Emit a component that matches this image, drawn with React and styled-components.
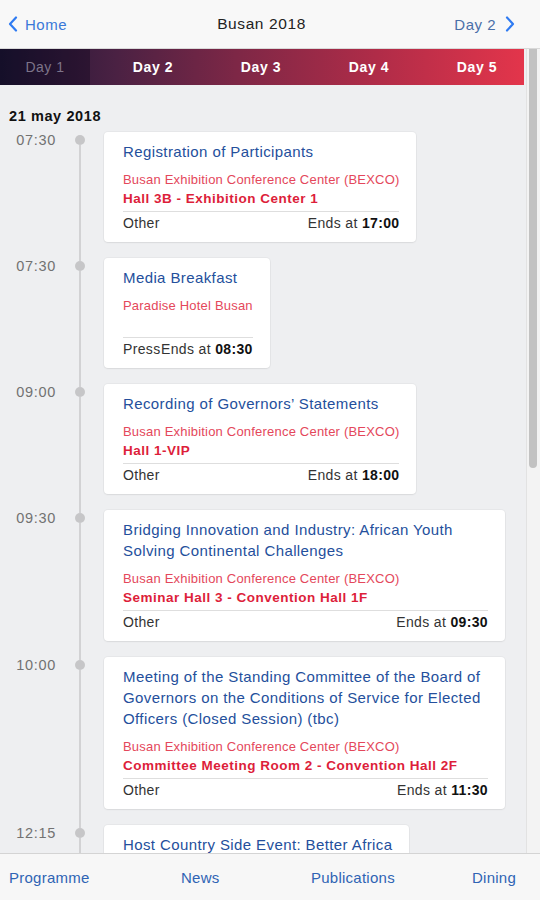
import React from 'react';
import styled, { createGlobalStyle } from 'styled-components';

const GlobalStyle = createGlobalStyle`
  html, body { margin: 0; padding: 0; }
  body { font-family: "Liberation Sans", Arial, Helvetica, sans-serif; background: #eeeff1; }
  * { box-sizing: border-box; }
`;

const Screen = styled.div`
  width: 540px;
  height: 900px;
  display: flex;
  flex-direction: column;
  overflow: hidden;
  background: #eeeff1;
`;

const NavBar = styled.header`
  flex: none;
  height: 49px;
  display: grid;
  grid-template-columns: 1fr auto 1fr;
  align-items: center;
  padding: 0 25px 0 8px;
  background: #f8f8f8;
  border-bottom: 1px solid #d9d9d9;
`;

const NavLink = styled.div`
  display: flex;
  align-items: center;
  gap: ${p => (p.$right ? '9px' : '7px')};
  justify-self: ${p => (p.$right ? 'end' : 'start')};
  font-size: 15px;
  letter-spacing: 0.5px;
  color: ${p => (p.$right ? '#4a6fa8' : '#3a78d8')};
`;

const Title = styled.div`
  font-size: 15.5px;
  letter-spacing: 0.6px;
  color: #222;
`;

const Body = styled.div`
  flex: 1;
  min-height: 0;
  display: flex;
`;

const MainCol = styled.div`
  width: 526px;
  flex: none;
  display: flex;
  flex-direction: column;
  overflow: hidden;
`;

const TabBar = styled.div`
  flex: none;
  height: 36px;
  margin-right: 2px;
  display: flex;
  overflow: hidden;
  background: linear-gradient(90deg, #1c1634 0%, #4a2143 22%, #7d2746 45%, #b02c48 72%, #e3354b 100%);
`;

const FirstTab = styled.div`
  flex: none;
  width: 90px;
  display: flex;
  align-items: center;
  justify-content: center;
  background: rgba(8, 4, 22, 0.35);
  color: #7d7489;
  font-size: 14px;
  letter-spacing: 0.5px;
`;

const TabGroup = styled.div`
  flex: none;
  display: flex;
  padding-left: 9px;
`;

const Tab = styled.div`
  flex: none;
  width: 108px;
  display: flex;
  align-items: center;
  justify-content: center;
  color: #fff;
  font-size: 14px;
  letter-spacing: 0.6px;
  font-weight: bold;
`;

const Content = styled.div`
  flex: 1;
  min-height: 0;
  overflow: hidden;
  padding: 22px 21px 0 8px;
`;

const DateHeading = styled.div`
  font-size: 14.5px;
  letter-spacing: 0.6px;
  font-weight: bold;
  line-height: 18px;
  color: #111;
  margin: 0 0 7px 1px;
`;

const Row = styled.div`
  display: flex;
`;

const Time = styled.div`
  flex: none;
  width: 48px;
  text-align: right;
  font-size: 14.5px;
  letter-spacing: 0.7px;
  line-height: 17px;
  color: #727272;
`;

const Rail = styled.div`
  flex: none;
  width: 48px;
  display: flex;
  flex-direction: column;
  align-items: center;
`;

const RailLine = styled.div`
  width: 2px;
  flex: ${p => (p.$grow ? '1' : 'none')};
  height: ${p => (p.$grow ? 'auto' : '3px')};
  background: ${p => (p.$hidden ? 'transparent' : '#d2d2d4')};
`;

const Dot = styled.div`
  flex: none;
  width: 10px;
  height: 10px;
  border-radius: 50%;
  background: #c6c6c8;
`;

const CardCol = styled.div`
  flex: 1;
  min-width: 0;
  padding-bottom: 16px;
`;

const Card = styled.div`
  width: fit-content;
  max-width: 100%;
  background: #fff;
  border-radius: 4px;
  padding: 9px 17px 8px 19px;
  box-shadow: 0 0 0 1px rgba(0, 0, 0, 0.03), 0 1px 2px rgba(0, 0, 0, 0.06);
`;

const EventTitle = styled.div`
  font-size: 15px;
  letter-spacing: 0.4px;
  line-height: 21px;
  color: #244f9c;
`;

const Venue = styled.div`
  margin-top: 8px;
  font-size: 13px;
  letter-spacing: 0.2px;
  line-height: 19px;
  color: #e4475b;
  white-space: nowrap;
`;

const Room = styled.div`
  font-size: 13.5px;
  letter-spacing: 0.5px;
  line-height: 19px;
  min-height: 19px;
  font-weight: bold;
  color: #dd1e3a;
  white-space: nowrap;
`;

const Footer = styled.div`
  margin-top: 3px;
  border-top: 1px solid #dedede;
  display: flex;
  justify-content: space-between;
  font-size: 14px;
  letter-spacing: 0.35px;
  line-height: 22px;
  color: #333;
  white-space: nowrap;
`;

const EndTime = styled.b`
  color: #111;
`;

const ScrollTrack = styled.div`
  flex: none;
  width: 14px;
  background: #f3f3f3;
  border-left: 1px solid #e2e2e2;
  padding-left: 2px;
`;

const ScrollThumb = styled.div`
  width: 8px;
  height: 419px;
  background: #c2c2c2;
  border-radius: 0 0 4px 4px;
`;

const BottomNav = styled.nav`
  flex: none;
  height: 47px;
  display: grid;
  grid-template-columns: 172px 130px 161px auto;
  align-items: center;
  padding-left: 9px;
  background: #f7f7f7;
  border-top: 1px solid #d4d4d4;
`;

const BottomItem = styled.div`
  font-size: 15px;
  letter-spacing: 0.25px;
  color: #2f64b4;
  white-space: nowrap;
`;

const Chevron = ({ dir = 'left' }) => (
  <svg width="10" height="16" viewBox="0 0 10 16">
    <polyline
      points={dir === 'left' ? '8,1.5 2,8 8,14.5' : '2,1.5 8,8 2,14.5'}
      fill="none"
      stroke="#2f7bf2"
      strokeWidth="2.2"
      strokeLinecap="round"
      strokeLinejoin="round"
    />
  </svg>
);

const events = [
  {
    time: '07:30',
    title: 'Registration of Participants',
    venue: 'Busan Exhibition Conference Center (BEXCO)',
    room: 'Hall 3B - Exhibition Center 1',
    type: 'Other',
    ends: '17:00',
  },
  {
    time: '07:30',
    title: 'Media Breakfast',
    venue: 'Paradise Hotel Busan',
    room: '',
    type: 'Press',
    ends: '08:30',
  },
  {
    time: '09:00',
    title: 'Recording of Governors\u2019 Statements',
    venue: 'Busan Exhibition Conference Center (BEXCO)',
    room: 'Hall 1-VIP',
    type: 'Other',
    ends: '18:00',
  },
  {
    time: '09:30',
    title: 'Bridging Innovation and Industry: African Youth Solving Continental Challenges',
    venue: 'Busan Exhibition Conference Center (BEXCO)',
    room: 'Seminar Hall 3 - Convention Hall 1F',
    type: 'Other',
    ends: '09:30',
  },
  {
    time: '10:00',
    title:
      'Meeting of the Standing Committee of the Board of Governors on the Conditions of Service for Elected Officers (Closed Session) (tbc)',
    venue: 'Busan Exhibition Conference Center (BEXCO)',
    room: 'Committee Meeting Room 2 - Convention Hall 2F',
    type: 'Other',
    ends: '11:30',
  },
  {
    time: '12:15',
    title: 'Host Country Side Event: Better Africa',
    venue: 'Paradise Hotel Busan',
    room: 'Grand Ballroom',
    type: 'Other',
    ends: '14:00',
  },
];

export default function App() {
  return (
    <>
      <GlobalStyle />
      <Screen>
        <NavBar>
          <NavLink>
            <Chevron dir="left" />
            <span>Home</span>
          </NavLink>
          <Title>Busan 2018</Title>
          <NavLink $right>
            <span>Day 2</span>
            <Chevron dir="right" />
          </NavLink>
        </NavBar>
        <Body>
          <MainCol>
            <TabBar>
              <FirstTab>Day 1</FirstTab>
              <TabGroup>
                <Tab>Day 2</Tab>
                <Tab>Day 3</Tab>
                <Tab>Day 4</Tab>
                <Tab>Day 5</Tab>
              </TabGroup>
            </TabBar>
            <Content>
              <DateHeading>21 may 2018</DateHeading>
              {events.map((e, i) => (
                <Row key={i}>
                  <Time>{e.time}</Time>
                  <Rail>
                    <RailLine $hidden={i === 0} />
                    <Dot />
                    <RailLine $grow />
                  </Rail>
                  <CardCol>
                    <Card>
                      <EventTitle>{e.title}</EventTitle>
                      <Venue>{e.venue}</Venue>
                      <Room>{e.room}</Room>
                      <Footer>
                        <span>{e.type}</span>
                        <span>
                          Ends at <EndTime>{e.ends}</EndTime>
                        </span>
                      </Footer>
                    </Card>
                  </CardCol>
                </Row>
              ))}
            </Content>
          </MainCol>
          <ScrollTrack>
            <ScrollThumb />
          </ScrollTrack>
        </Body>
        <BottomNav>
          <BottomItem>Programme</BottomItem>
          <BottomItem>News</BottomItem>
          <BottomItem>Publications</BottomItem>
          <BottomItem>Dining</BottomItem>
        </BottomNav>
      </Screen>
    </>
  );
}
